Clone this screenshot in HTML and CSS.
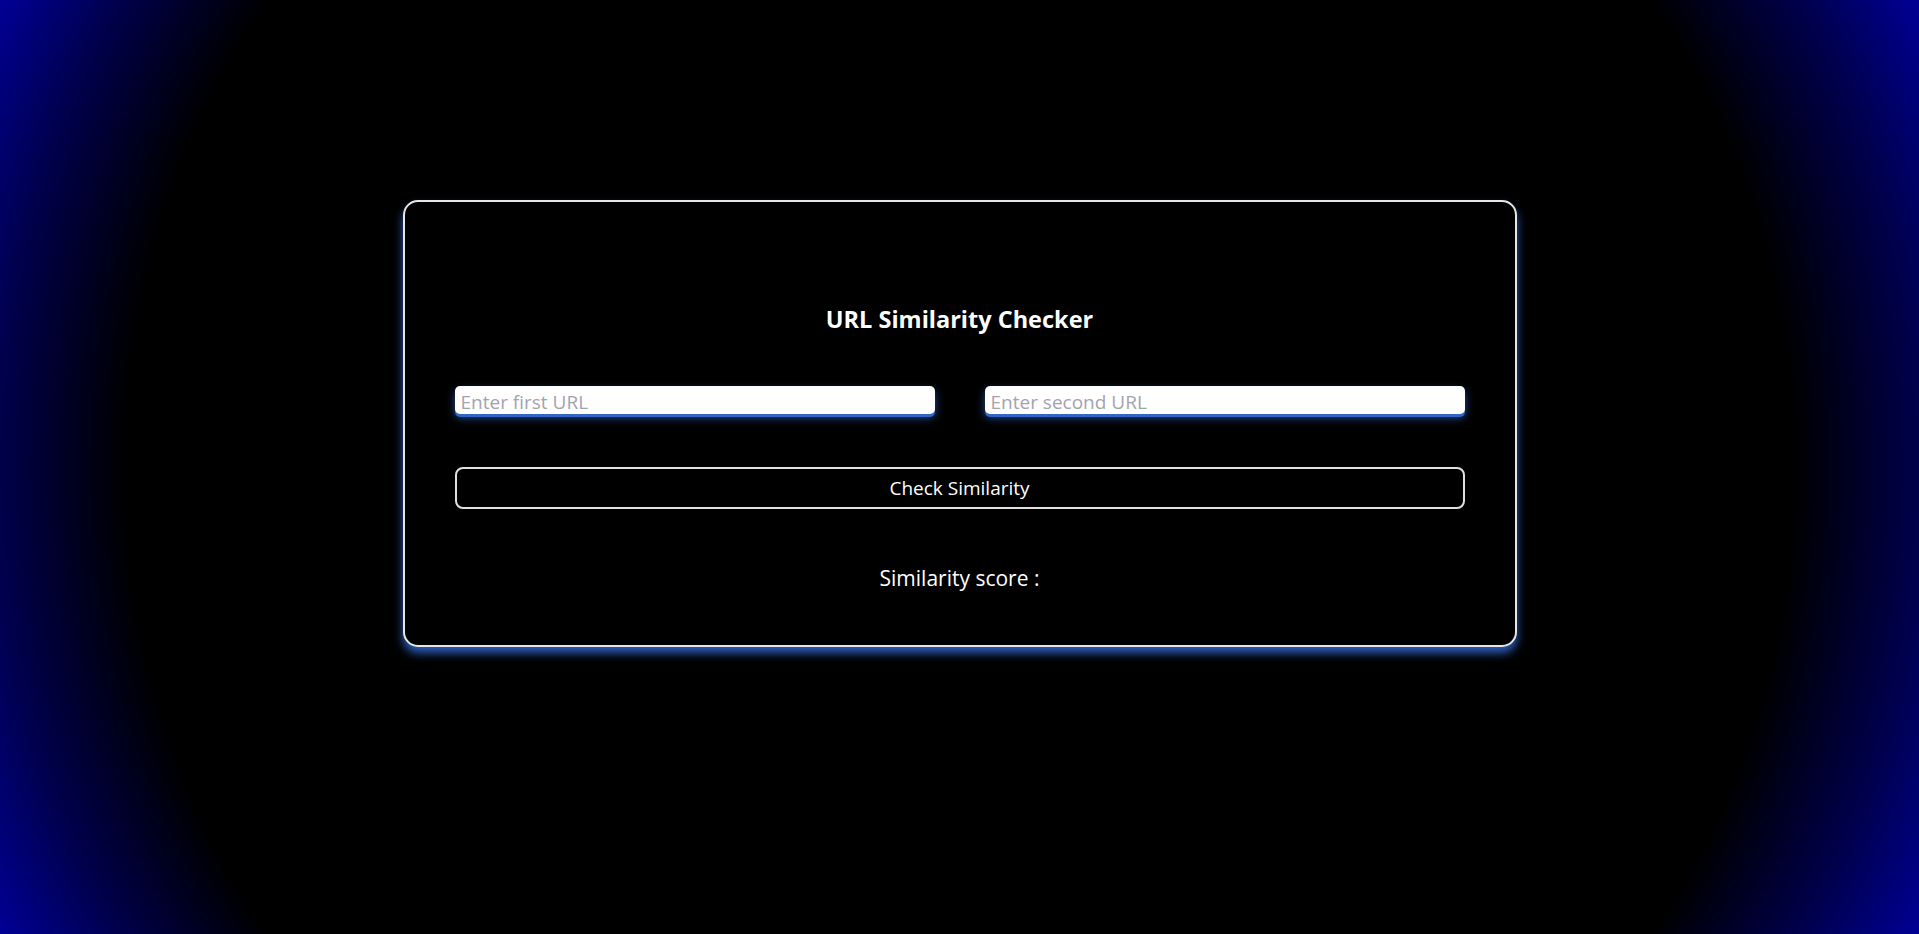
FILE: index.html
```html
<!DOCTYPE html>
<html lang="en">
<head>
<meta charset="utf-8">
<title>URL Similarity Checker</title>
<link rel="stylesheet" href="styles.css">
</head>
<body>
  <main class="page">
    <section class="card">
      <h2 class="title">URL Similarity Checker</h2>
      <div class="inputs">
        <input class="url-input" type="text" placeholder="Enter first URL">
        <input class="url-input" type="text" placeholder="Enter second URL">
      </div>
      <button class="check-btn" type="button">Check Similarity</button>
      <p class="score">Similarity score :</p>
    </section>
  </main>
</body>
</html>
```

FILE: styles.css
```css
* {
  box-sizing: border-box;
}

html, body {
  margin: 0;
  padding: 0;
  height: 100%;
}

body {
  background: radial-gradient(circle at center, #000000 78%, #00004c 90%, #000096 100%);
  font-family: "Open Sans", "Noto Sans", sans-serif;
  color: #ffffff;
  overflow: hidden;
}

.page {
  display: flex;
  justify-content: center;
  padding-top: 200px;
}

.card {
  width: 1114px;
  border: 2px solid #e6e6e6;
  border-radius: 15px;
  background: #000;
  box-shadow: 0 6px 10px rgba(48, 100, 200, 0.95);
  padding: 101px 50px 53px 50px;
  display: flex;
  flex-direction: column;
  align-items: stretch;
}

.title {
  margin: 0;
  font-size: 23.5px;
  line-height: 32px;
  font-weight: 700;
  text-align: center;
  color: #fff;
}

.inputs {
  display: flex;
  gap: 50px;
  margin-top: 51px;
}

.url-input {
  flex: 1 1 0;
  min-width: 0;
  height: 28px;
  border: none;
  outline: none;
  border-radius: 5px;
  background: #fff;
  padding: 3px 6px 0 6px;
  font-family: "Open Sans", "Noto Sans", sans-serif;
  font-size: 19px;
  line-height: 24px;
  color: #222;
  box-shadow: 0 3px 0 #3266c6, 0 4px 8px rgba(48, 100, 200, 0.75);
}

.url-input::placeholder {
  color: #a3a3b0;
}

.check-btn {
  margin-top: 53px;
  height: 42px;
  border: 2px solid #e0e0e0;
  border-radius: 8px;
  background: #000;
  color: #fff;
  font-family: "Open Sans", "Noto Sans", sans-serif;
  font-size: 19px;
  line-height: 24px;
  padding: 0;
  cursor: pointer;
}

.score {
  margin: 55px 0 0 0;
  font-size: 21px;
  line-height: 28px;
  text-align: center;
  color: #fff;
}
```
